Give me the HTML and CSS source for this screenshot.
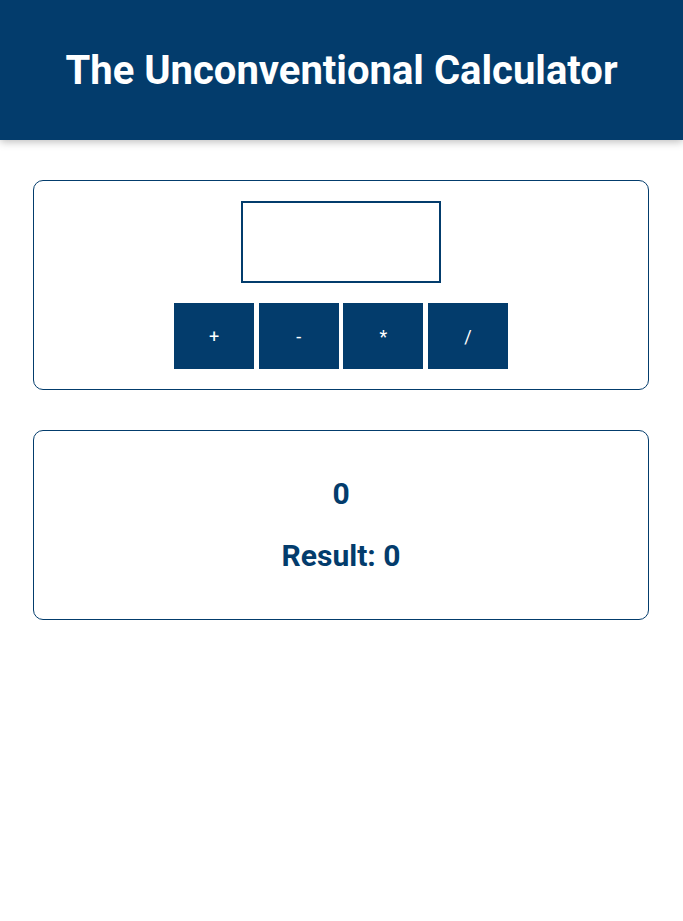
FILE: index.html
```html
<!DOCTYPE html>
<html lang="en">
<head>
<meta charset="utf-8">
<title>The Unconventional Calculator</title>
<link rel="stylesheet" href="styles.css">
</head>
<body>
<header class="header">
  <h1 class="title">The Unconventional Calculator</h1>
</header>
<section class="card inputs">
  <input class="number-input" type="number">
  <div class="controls">
    <button class="op-btn">+</button>
    <button class="op-btn">-</button>
    <button class="op-btn">*</button>
    <button class="op-btn">/</button>
  </div>
</section>
<section class="card results">
  <h2 class="calc">0</h2>
  <h2 class="result">Result: 0</h2>
</section>
</body>
</html>
```
FILE: styles.css
```css
* { box-sizing: border-box; }
html { font-family: Roboto, "Liberation Sans", sans-serif; }
body { margin: 0; }
.header {
  height: 140px;
  background: #033c6c;
  color: #fff;
  display: flex;
  align-items: center;
  justify-content: center;
  box-shadow: 0 2px 8px rgba(0,0,0,0.26);
}
.title { margin: 0; font-size: 40px; font-weight: 700; }
.card {
  width: 616px;
  margin: 40px 0 40px 33px;
  border: 1px solid #033c6c;
  border-radius: 10px;
  padding: 20px;
  display: flex;
  flex-direction: column;
  align-items: center;
}
.number-input {
  width: 200px;
  height: 82px;
  border: 2px solid #033c6c;
  font: inherit;
  font-size: 24px;
  text-align: center;
}
.controls {
  margin-top: 20px;
  display: flex;
  gap: 4.6px;
}
.op-btn {
  width: 80px;
  height: 66px;
  border: none;
  background: #033c6c;
  color: #fff;
  font-family: inherit;
  font-size: 18px;
}
.results { padding: 45px 20px 46px; }
.results h2 { margin: 0; font-size: 30px; font-weight: 700; color: #033c6c; line-height: 35px; }
.results .result { margin-top: 27px; }
```
